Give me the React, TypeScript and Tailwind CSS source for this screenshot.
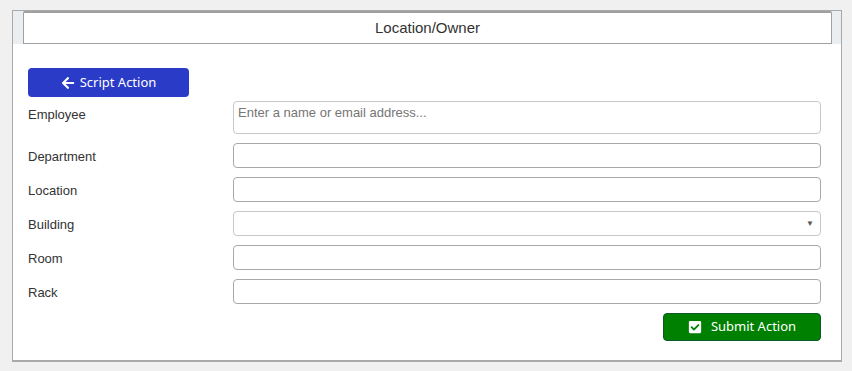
import React from "react";
import { FaArrowLeft, FaCheckSquare } from "react-icons/fa";

const labelCls = "w-[205px] shrink-0 pt-[5px] text-[13px] leading-[18px] text-[#333]";
const inputCls = "flex-1 h-[25px] rounded-[4px] border border-[#a9a9a9] bg-white";

function Row({ label, children }: { label: string; children?: React.ReactNode }) {
  return (
    <div className="flex">
      <div className={labelCls}>{label}</div>
      {children ?? <div className={inputCls} />}
    </div>
  );
}

export default function App() {
  return (
    <div
      className="h-[371px] w-[852px] bg-[#f0f0f0] pt-[10px] pl-[12px]"
      style={{ fontFamily: '"Liberation Sans", Arial, sans-serif' }}
    >
      <div className="w-[830px] border border-b-2 border-[#a9a9a9] bg-white">
        <div className="bg-[#ebeef0] pl-[10px] pr-[9px]">
          <div className="flex h-[33px] items-center justify-center rounded-t-[2px] border border-t-2 border-[#a0a0a0] bg-white text-[15px] text-[#333]">
            Location/Owner
          </div>
        </div>
        <div className="pl-[15px] pr-[20px] pt-[24px] pb-[19px]">
          <button
            className="flex h-[29px] w-[161px] items-center justify-center gap-[5px] rounded-[4px] bg-[#2a3bc8] text-[13px] text-white"
            style={{ fontFamily: '"Noto Sans", "Open Sans", sans-serif' }}
          >
            <FaArrowLeft className="h-[14px] w-[14px]" />
            <span>Script Action</span>
          </button>
          <div className="mt-[4px] flex flex-col gap-[9px]">
            <div className="flex">
              <div className={labelCls}>Employee</div>
              <div className="flex-1 h-[33px] rounded-[4px] border border-[#c8c8c8] bg-white px-[4px] pt-[3px] text-[13px] leading-[16px] text-[#757575]">
                Enter a name or email address...
              </div>
            </div>
            <Row label="Department" />
            <Row label="Location" />
            <Row label="Building">
              <div className="flex-1 h-[25px] rounded-[4px] border border-[#c8c8c8] bg-white flex items-center justify-end pr-[6px]">
                <span className="text-[8px] text-[#555]">▼</span>
              </div>
            </Row>
            <Row label="Room" />
            <Row label="Rack" />
            <div className="flex justify-end">
              <button
                className="flex h-[28px] w-[158px] items-center justify-center gap-[9px] rounded-[4px] border border-[#0a5a2a] bg-[#008000] text-[13px] text-white"
                style={{ fontFamily: '"Noto Sans", "Open Sans", sans-serif' }}
              >
                <FaCheckSquare className="h-[14px] w-[14px]" />
                <span>Submit Action</span>
              </button>
            </div>
          </div>
        </div>
      </div>
    </div>
  );
}
